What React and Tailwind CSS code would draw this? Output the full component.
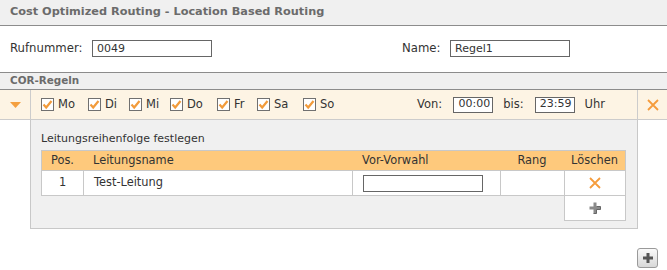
import React from 'react';

// orange check inside a grey square, as in the legacy ui
const CheckBox = () => (
  <svg width="13" height="13" viewBox="0 0 13 13" className="shrink-0">
    <rect x="0.5" y="0.5" width="12" height="12" fill="#fff" stroke="#707070" />
    <path d="M2.5 6.5 L5.2 9.5 L10.5 3" fill="none" stroke="#f29b3b" strokeWidth="2.2" />
  </svg>
);

const OrangeX = ({ size = 12 }) => (
  <svg width={size} height={size} viewBox="0 0 12 12">
    <path d="M1 1 L11 11 M11 1 L1 11" stroke="#f59c3c" strokeWidth="1.8" />
  </svg>
);

const GreyPlus = () => (
  <svg width="12" height="12" viewBox="0 0 12 12">
    <path d="M4.5 0.5 H7.5 V4.5 H11.5 V7.5 H7.5 V11.5 H4.5 V7.5 H0.5 V4.5 H4.5 Z" fill="#8a8a8a" />
    <path d="M7.5 4.5 H11.5 V7.5 H7.5 V11.5 H4.5" fill="none" stroke="#666" strokeWidth="1" />
  </svg>
);

// Breite je Wochentag (Checkbox + Text + Abstand)
const days = [
  { label: 'Mo', width: 'w-[47px]' },
  { label: 'Di', width: 'w-[41px]' },
  { label: 'Mi', width: 'w-[41px]' },
  { label: 'Do', width: 'w-[47px]' },
  { label: 'Fr', width: 'w-[40px]' },
  { label: 'Sa', width: 'w-[46px]' },
  { label: 'So', width: 'w-[40px]' },
];

export default function App() {
  return (
    <div className="w-[667px] h-[270px] bg-white font-['DejaVu_Sans',Verdana,sans-serif] text-[11px] text-[#333] overflow-hidden">
      {/* Kopfzeile */}
      <div className="h-[26px] bg-[#f0f0f0] border-b border-[#8c8c8c] flex items-center pl-[10px]">
        <span className="text-[11.3px] font-bold text-[#6b6b6b]">Cost Optimized Routing - Location Based Routing</span>
      </div>

      {/* Rufnummer / Name */}
      <div className="h-[47px] border-b border-[#8c8c8c] flex items-center text-[11.7px]">
        <div className="w-[402px] flex items-center pl-[10px]">
          <span className="w-[82px]">Rufnummer:</span>
          <input
            readOnly
            value="0049"
            className="w-[120px] h-[17px] border border-[#666] px-[4px] text-[11px] outline-none"
          />
        </div>
        <div className="flex items-center">
          <span className="w-[48px]">Name:</span>
          <input
            readOnly
            value="Regel1"
            className="w-[120px] h-[17px] border border-[#666] px-[4px] text-[11px] outline-none"
          />
        </div>
      </div>

      {/* COR-Regeln */}
      <div className="h-[17px] bg-[#f0f0f0] border-b border-[#8c8c8c] flex items-center pl-[10px]">
        <span className="text-[10.4px] font-bold text-[#6b6b6b]">COR-Regeln</span>
      </div>

      {/* Regel-Zeile */}
      <div className="h-[30px] bg-[#fdf4e4] border-b border-[#cccccc] flex">
        <div className="w-[31px] border-r border-[#cccccc] flex items-center justify-center">
          <svg width="11" height="6" viewBox="0 0 11 6">
            <path d="M0 0 H11 L5.5 6 Z" fill="#f4a040" />
          </svg>
        </div>
        <div className="flex-1 flex items-center pl-[10px] pr-[32px] border-r border-[#cccccc]">
          <div className="flex items-center">
            {days.map(day => (
              <label key={day.label} className={`${day.width} flex items-center gap-[4px]`}>
                <CheckBox />
                <span className="text-[11.5px]">{day.label}</span>
              </label>
            ))}
          </div>
          <div className="ml-auto flex items-center text-[11.5px]">
            <span className="mr-[11px]">Von:</span>
            <input
              readOnly
              value="00:00"
              className="w-[40px] h-[16px] border border-[#666] bg-white px-[2px] text-[11px] text-right outline-none"
            />
            <span className="ml-[10px] mr-[11px]">bis:</span>
            <input
              readOnly
              value="23:59"
              className="w-[40px] h-[16px] border border-[#666] bg-white px-[2px] text-[11px] text-right outline-none"
            />
            <span className="ml-[10px]">Uhr</span>
          </div>
        </div>
        <div className="w-[29px] flex items-center justify-center">
          <OrangeX />
        </div>
      </div>

      {/* Leitungsreihenfolge */}
      <div className="flex">
        <div className="w-[30px]" />
        <div className="w-[608px] bg-[#f0f0f0] border-l border-r border-b border-[#c8c8c8] px-[10px] pt-[11px] pb-[7px]">
          <div className="h-[19px] text-[11px]">Leitungsreihenfolge festlegen</div>
          <div className="grid grid-cols-[42px_269px_148px_64px_62px] text-[11.4px]">
            <div className="h-[20px] bg-[#fec97c] border-t border-l border-[#c8c8c8] flex items-center justify-center">Pos.</div>
            <div className="h-[20px] bg-[#fec97c] border-t border-[#c8c8c8] flex items-center pl-[10px]">Leitungsname</div>
            <div className="h-[20px] bg-[#fec97c] border-t border-[#c8c8c8] flex items-center pl-[10px]">Vor-Vorwahl</div>
            <div className="h-[20px] bg-[#fec97c] border-t border-[#c8c8c8] flex items-center justify-center">Rang</div>
            <div className="h-[20px] bg-[#fec97c] border-t border-r border-[#c8c8c8] flex items-center justify-center">Löschen</div>

            <div className="h-[26px] bg-white border-l border-t border-b border-[#c8c8c8] flex items-center justify-center">1</div>
            <div className="h-[26px] bg-white border-l border-t border-b border-[#c8c8c8] flex items-center pl-[10px]">Test-Leitung</div>
            <div className="h-[26px] bg-white border-l border-t border-b border-[#c8c8c8] flex items-center pl-[10px]">
              <input readOnly className="w-[120px] h-[17px] border border-[#666] outline-none" />
            </div>
            <div className="h-[26px] bg-white border-l border-t border-b border-[#c8c8c8]" />
            <div className="h-[26px] bg-white border-l border-r border-t border-b border-[#c8c8c8] flex items-center justify-center">
              <OrangeX />
            </div>

            <div className="col-start-5 h-[25px] bg-white border-l border-r border-b border-[#c8c8c8] flex items-center justify-center">
              <GreyPlus />
            </div>
          </div>
        </div>
      </div>

      {/* Neue Regel */}
      <div className="flex justify-end pr-[9px] pt-[19px]">
        <button className="w-[21px] h-[20px] rounded-[3px] border border-[#9a9a9a] bg-gradient-to-b from-[#fafafa] to-[#d8d8d8] flex items-center justify-center">
          <svg width="10" height="10" viewBox="0 0 10 10">
            <path d="M3.5 0 H6.5 V3.5 H10 V6.5 H6.5 V10 H3.5 V6.5 H0 V3.5 H3.5 Z" fill="#555" />
          </svg>
        </button>
      </div>
    </div>
  );
}
